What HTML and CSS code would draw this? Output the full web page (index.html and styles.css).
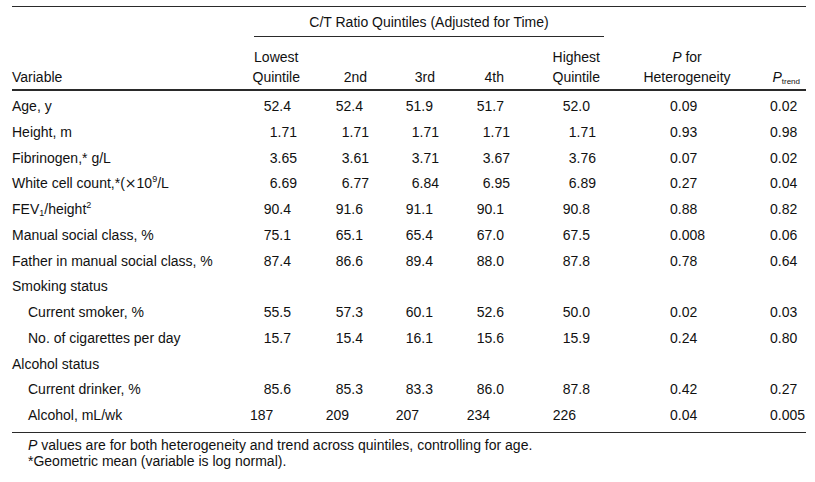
FILE: index.html
```html
<!DOCTYPE html>
<html lang="en">
<head>
<meta charset="utf-8">
<title>C/T Ratio Quintiles</title>
<link rel="stylesheet" href="styles.css">
</head>
<body>
<div class="page">
  <table class="tbl">
    <colgroup>
      <col class="c-var"><col class="c-q1"><col class="c-q2"><col class="c-q3"><col class="c-q4"><col class="c-q5"><col class="c-het"><col class="c-trend">
    </colgroup>
    <thead>
      <tr class="row-span">
        <th class="blank"></th>
        <th colspan="5" class="span-cell"><div class="spanner">C/T Ratio Quintiles (Adjusted for Time)</div></th>
        <th class="blank"></th>
        <th class="blank"></th>
      </tr>
      <tr class="row-head">
        <th class="h-var">Variable</th>
        <th class="h-num h-q1"><span class="stack">Lowest<br>Quintile</span></th>
        <th class="h-num h-q2">2nd</th>
        <th class="h-num h-q3">3rd</th>
        <th class="h-num h-q4">4th</th>
        <th class="h-num h-q5"><span class="stack">Highest<br>Quintile</span></th>
        <th class="h-het"><i>P</i> for<br>Heterogeneity</th>
        <th class="h-trend"><i>P</i><sub class="sub-trend">trend</sub></th>
      </tr>
    </thead>
    <tbody>
      <tr><td class="var">Age, y</td><td class="n d1">52.4</td><td class="n d1">52.4</td><td class="n d1">51.9</td><td class="n d1">51.7</td><td class="n d1">52.0</td><td class="het">0.09</td><td class="trend">0.02</td></tr>
      <tr><td class="var">Height, m</td><td class="n d2">1.71</td><td class="n d2">1.71</td><td class="n d2">1.71</td><td class="n d2">1.71</td><td class="n d2">1.71</td><td class="het">0.93</td><td class="trend">0.98</td></tr>
      <tr><td class="var">Fibrinogen,* g/L</td><td class="n d2">3.65</td><td class="n d2">3.61</td><td class="n d2">3.71</td><td class="n d2">3.67</td><td class="n d2">3.76</td><td class="het">0.07</td><td class="trend">0.02</td></tr>
      <tr><td class="var">White cell count,*(<span class="times">×</span>10<sup class="sup">9</sup>/L</td><td class="n d2">6.69</td><td class="n d2">6.77</td><td class="n d2">6.84</td><td class="n d2">6.95</td><td class="n d2">6.89</td><td class="het">0.27</td><td class="trend">0.04</td></tr>
      <tr><td class="var">FEV<sub class="sub">1</sub>/height<sup class="sup">2</sup></td><td class="n d1">90.4</td><td class="n d1">91.6</td><td class="n d1">91.1</td><td class="n d1">90.1</td><td class="n d1">90.8</td><td class="het">0.88</td><td class="trend">0.82</td></tr>
      <tr><td class="var">Manual social class, %</td><td class="n d1">75.1</td><td class="n d1">65.1</td><td class="n d1">65.4</td><td class="n d1">67.0</td><td class="n d1">67.5</td><td class="het">0.008</td><td class="trend">0.06</td></tr>
      <tr><td class="var">Father in manual social class, %</td><td class="n d1">87.4</td><td class="n d1">86.6</td><td class="n d1">89.4</td><td class="n d1">88.0</td><td class="n d1">87.8</td><td class="het">0.78</td><td class="trend">0.64</td></tr>
      <tr><td class="var">Smoking status</td><td></td><td></td><td></td><td></td><td></td><td></td><td></td></tr>
      <tr><td class="var sub-row">Current smoker, %</td><td class="n d1">55.5</td><td class="n d1">57.3</td><td class="n d1">60.1</td><td class="n d1">52.6</td><td class="n d1">50.0</td><td class="het">0.02</td><td class="trend">0.03</td></tr>
      <tr><td class="var sub-row">No. of cigarettes per day</td><td class="n d1">15.7</td><td class="n d1">15.4</td><td class="n d1">16.1</td><td class="n d1">15.6</td><td class="n d1">15.9</td><td class="het">0.24</td><td class="trend">0.80</td></tr>
      <tr><td class="var">Alcohol status</td><td></td><td></td><td></td><td></td><td></td><td></td><td></td></tr>
      <tr><td class="var sub-row">Current drinker, %</td><td class="n d1">85.6</td><td class="n d1">85.3</td><td class="n d1">83.3</td><td class="n d1">86.0</td><td class="n d1">87.8</td><td class="het">0.42</td><td class="trend">0.27</td></tr>
      <tr><td class="var sub-row">Alcohol, mL/wk</td><td class="n int int-first">187</td><td class="n int">209</td><td class="n int">207</td><td class="n int">234</td><td class="n int">226</td><td class="het">0.04</td><td class="trend">0.005</td></tr>
    </tbody>
  </table>
  <div class="notes">
    <p class="note"><i>P</i> values are for both heterogeneity and trend across quintiles, controlling for age.</p>
    <p class="note">*Geometric mean (variable is log normal).</p>
  </div>
</div>
</body>
</html>
```

FILE: styles.css
```css
html, body {
  margin: 0;
  padding: 0;
  background: #ffffff;
}

body {
  font-family: "Liberation Sans", Arial, sans-serif;
  font-size: 14px;
  color: #111111;
}

.page {
  padding: 6px 9px 0 12px;
  width: 794px;
}

.tbl {
  width: 794px;
  table-layout: fixed;
  border-collapse: separate;
  border-spacing: 0;
  border-top: 1px solid #2a2a2a;
  border-bottom: 1px solid #2a2a2a;
}

.c-var { width: 238px; }
.c-q1 { width: 47px; }
.c-q2 { width: 72px; }
.c-q3 { width: 70px; }
.c-q4 { width: 71px; }
.c-q5 { width: 86px; }
.c-het { width: 164px; }
.c-trend { width: 46px; }

th, td {
  padding: 0;
  font-weight: normal;
  white-space: nowrap;
}

/* spanner row */
.row-span th {
  padding: 5px 0 10px;
  line-height: 20px;
}

.spanner {
  margin: 0 -8px 0 4px;
  padding-bottom: 4px;
  border-bottom: 1px solid #2a2a2a;
  text-align: center;
}

/* column header row */
.row-head th {
  line-height: 20px;
  padding-bottom: 2px;
  border-bottom: 2px solid #2a2a2a;
  vertical-align: bottom;
}

.h-var { text-align: left; }

.h-num { text-align: right; }

.stack {
  display: inline-block;
  text-align: center;
}

.row-head .h-q1 .stack { margin-right: -3px; }
.row-head .h-q2 { padding-right: 2px; }
.row-head .h-q3 { padding-right: 4px; }
.row-head .h-q4 { padding-right: 6px; }
.row-head .h-q5 .stack { margin-right: -4px; }

.row-head .h-het {
  text-align: center;
  padding-left: 18px;
}

.row-head .h-trend {
  text-align: right;
  padding-right: 6px;
}

.sub-trend {
  font-size: 8px;
  vertical-align: -2px;
  line-height: 0;
}

/* body rows */
tbody td {
  line-height: 25.75px;
  vertical-align: middle;
}

tbody tr:first-child td { padding-top: 3px; }
tbody tr:last-child td { padding-bottom: 3px; }

.var { text-align: left; }
.sub-row { padding-left: 16px; }

.n { text-align: right; }
.d2 { padding-right: 0; }
.d1 { padding-right: 6px; }
.int { padding-right: 20px; }
.int-first { padding-right: 24px; }

.het { padding-left: 74px; }
.trend { padding-left: 10px; }

.sup {
  font-size: 9px;
  vertical-align: 6px;
  line-height: 0;
}

.sub {
  font-size: 9px;
  vertical-align: -2px;
  line-height: 0;
}

.times {
  font-family: "DejaVu Sans", sans-serif;
  font-size: 14px;
}

/* notes */
.notes {
  margin-top: 4px;
  padding-left: 16px;
}

.note {
  margin: 0;
  line-height: 16px;
}
```
